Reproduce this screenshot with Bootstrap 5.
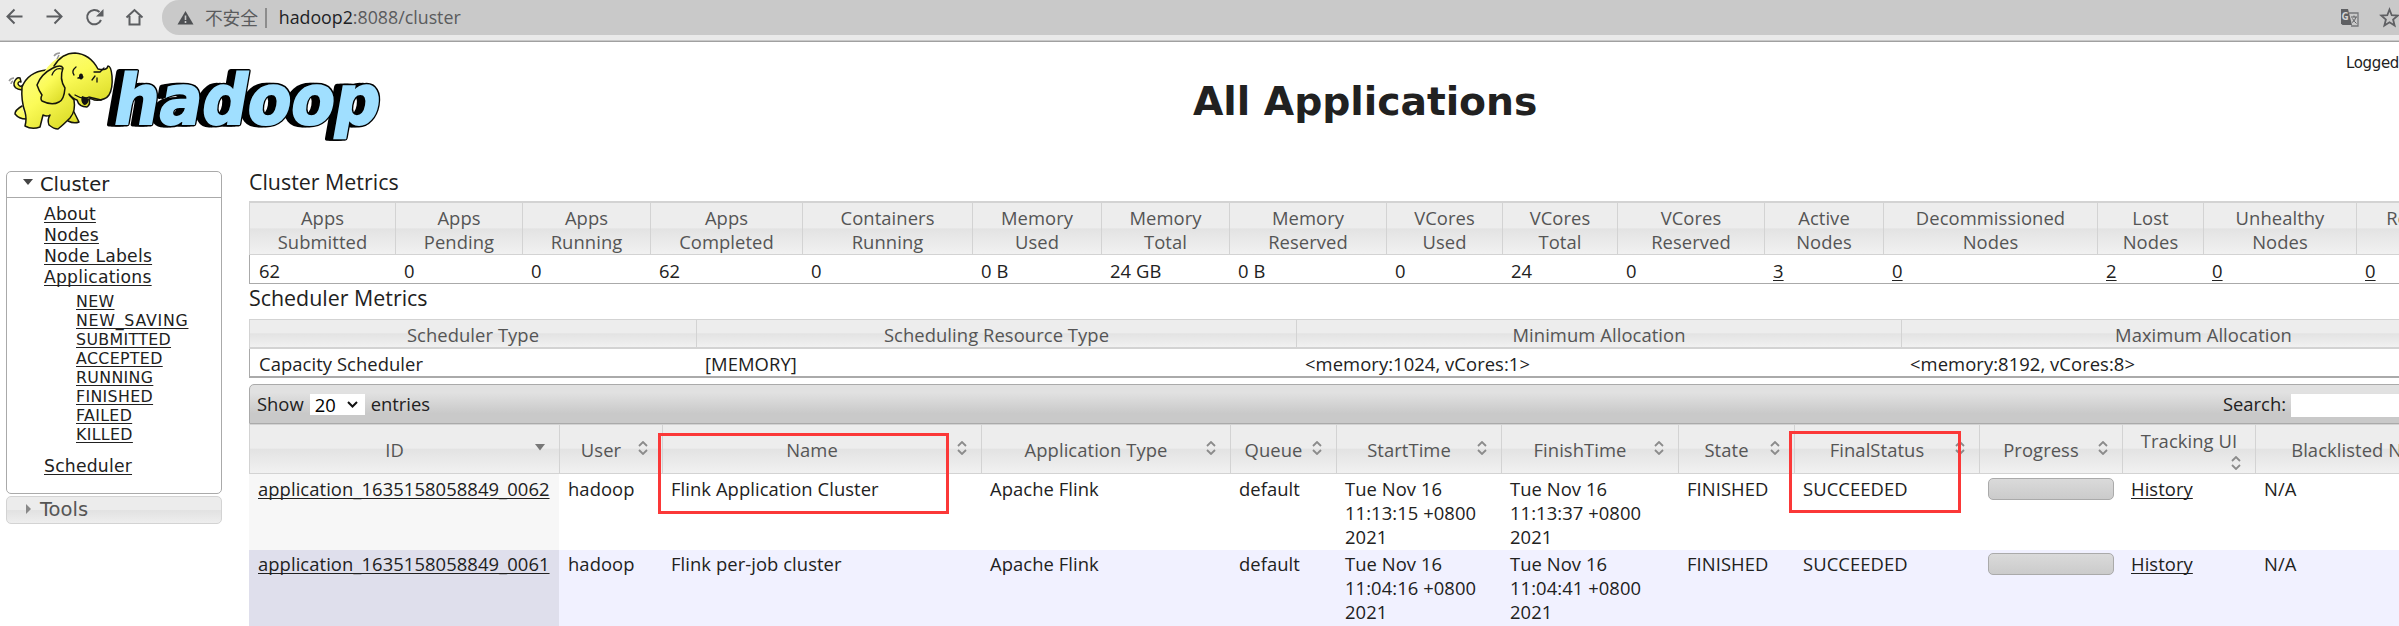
<!DOCTYPE html>
<html lang="en">
<head>
<meta charset="utf-8">
<title>All Applications</title>
<link href="https://cdn.jsdelivr.net/npm/bootstrap@5.3.0/dist/css/bootstrap.min.css" rel="stylesheet">
<style>
html,body{height:626px;overflow:hidden}
body{font-family:"Open Sans","Noto Sans CJK SC",sans-serif;font-size:18.4px;line-height:24px;color:#212121;background:#fff}
a,a:hover{color:#212121;text-decoration:underline;text-underline-offset:2px;text-decoration-thickness:1px;text-decoration-skip-ink:none}
.browser{height:42px;background:#e9e9e9;border-bottom:1px solid #a0a0a0;box-shadow:inset 0 -1px 0 #c8c8c8;padding-left:5px}
.browser .tool{width:40px;height:35px;flex:none}
.omni{height:35px;background:#c9c9c9;border-radius:17px 0 0 17px;margin-left:-3px;padding-left:14px;font-size:17.8px;color:#5a5b5d}
.omni .host{color:#202124}
.omni .bar{width:2px;height:20px;background:#8c8c8c;margin:0 12px 0 7px}
.banner{height:129px}
.banner h1{font:bold 39.3px/48px "DejaVu Sans",sans-serif;letter-spacing:-.05px;margin:0 0 0 793px;padding-top:36px;width:348px;white-space:nowrap}
.login{font:15px/20px "DejaVu Sans",sans-serif;letter-spacing:-.35px;padding-top:11px;width:53px;white-space:nowrap;overflow:hidden;color:#222}
.side{width:249px;padding-left:6px;font-family:"DejaVu Sans",sans-serif;flex:none}
.acc{width:216px;border:1px solid #aaa;border-radius:5px}
.acc-head{font-size:19.5px;line-height:25px;padding-left:15px}
.acc-body{height:296px;border-top:1px solid #aaa;padding:6px 0 0 37px}
.acc-body>a{display:block;font-size:17.2px;line-height:21px;width:max-content;letter-spacing:.22px}
.acc-sub{padding:4px 0 12px 32px}
.acc-sub a{display:block;font-size:15.8px;line-height:19px;width:max-content;letter-spacing:.35px}
.acc-sub a.wide{letter-spacing:.75px}
.acc.closed{margin-top:2px;height:28px;border-color:#d3d3d3;color:#555;background:linear-gradient(#ececec 50%,#e2e2e2 52%,#eee)}
.grid{table-layout:fixed;border-collapse:separate;border-spacing:0;width:2250px;margin:0;letter-spacing:.07px}
.grid th{font-weight:400;color:#555;text-align:center;border:1px solid #d3d3d3;border-width:1px 0 1px 1px;padding:2px 9px 0;background:linear-gradient(#ededed 48%,#e3e3e3 51%,#f1f1f1)}
.grid td{padding:0 9px;vertical-align:top}
.metric th{border-top-width:2px;height:54px}
.metric td,.sched td{border-bottom:1px solid #aaa;line-height:24px;height:29px;padding-top:4px}
.metric td:first-child,.sched td:first-child{border-left:1px solid #aaa}
.sched td{border-bottom-width:2px;padding-top:3px}
.sched th{height:30px;border-bottom-width:2px}
.title{font-size:21.4px;line-height:28px}
.main-pane{width:2256px;flex:none}
.dt-bar{width:2250px;height:40px;border:1px solid #aaa;border-radius:5px 5px 0 0;background:linear-gradient(#e1e1e1 20%,#c9c9c9 75%);padding:0 0 0 7px}
.len{width:55px;height:21px;background:#fff;color:#000;padding:0 7px 0 5px;margin:1px 6px 0}
.find{width:207px;height:23px;background:#fff;margin:3px 0 0 5px}
.apps th{height:50px}
.apps .ico{width:20px;flex:none;line-height:0;padding-bottom:4px}
.apps td{padding-top:3px;height:76px;background:#fff}
.apps tr.even td{background:#f1f1ff;height:76px;padding-top:2px}
.apps td:first-child{background:#f7f7f7;white-space:nowrap}
.apps tr.even td:first-child{background:#dfdfec}
.prog{width:126px;height:22px;border:1px solid #aaa;border-radius:5px;background:linear-gradient(#dadada,#cbcbcb);margin-top:1px}
.mark-box{position:absolute;border:3px solid #fb3838;z-index:5}
</style>
</head>
<body>
<header class="browser d-flex">
  <svg class="tool" viewBox="0 0 40 35" fill="none" stroke="#5c5e61" stroke-width="2"><path d="M17.500 16.500H3M9.500 9.500l-7 7 7 7"/></svg>
  <svg class="tool" viewBox="0 0 40 35" fill="none" stroke="#5c5e61" stroke-width="2"><path d="M1.500 16.500H16M9.500 9.500l7 7-7 7"/></svg>
  <svg class="tool" viewBox="0 0 40 35" fill="none" stroke="#5c5e61" stroke-width="2"><path d="M16 20A7.200 7.200 0 1 1 14.500 12"/><path d="M18.500 9v7.500h-7.500z" fill="#5c5e61" stroke="none"/></svg>
  <svg class="tool" viewBox="0 0 40 35" fill="none" stroke="#5c5e61" stroke-width="2"><path d="M1.500 17.500L9.500 10l8 7.500M4.500 16v8.500h10V16"/></svg>
  <div class="omni d-flex align-items-center flex-fill">
    <svg width="17" height="15" viewBox="0 0 17 15" class="me-2 flex-shrink-0" style="margin-left:1px"><path d="M8.500 1L16.500 14.500H.5z" fill="#4e5053"/><path d="M8.500 5.500v4.500M8.500 11v2" stroke="#c9c9c9" stroke-width="1.600"/></svg>
    <span style="margin-left:3px;letter-spacing:-.2px">不安全</span><span class="bar"></span><span style="padding-bottom:1px"><span class="host">hadoop2</span>:8088/cluster</span>
    <svg class="ms-auto flex-shrink-0" width="59" height="24" viewBox="0 0 59 24">
      <path d="M9 7h9v13h-7" fill="none" stroke="#76777a" stroke-width="1.300"/><path d="M1 3h7l4 16H2.500L1 17.500z" fill="#5f6063"/>
      <text x="1.500" y="14" font-size="10" font-weight="700" fill="#d5d5d5">G</text><path d="M11 11h6M14 9.500V11M16 11q-1 4-4 5.500M12.500 12.500q1.500 3 4 5" stroke="#5f6063" fill="none"/>
      <path d="M49.500 3.500l2.200 5.700 6 .4-4.600 3.900 1.500 6-5.100-3.300-5.100 3.300 1.500-6-4.600-3.900 6-.4z" fill="none" stroke="#5f6063" stroke-width="1.800"/>
    </svg>
  </div>
</header>
<div class="banner d-flex">
  <svg width="400" height="110" viewBox="0 42 400 110" class="flex-shrink-0">
    <defs><linearGradient id="skin" x1="0" y1="0" x2=".7" y2="1"><stop offset="0" stop-color="#fdfd86"/><stop offset=".5" stop-color="#fbfb58"/><stop offset="1" stop-color="#dede2b"/></linearGradient></defs>
    <g font-family="DejaVu Sans" font-weight="700" font-size="69" transform="translate(110 124) skewX(-10)">
      <g fill="#000" stroke="#000" stroke-width="5" stroke-linejoin="round">
        <text x="-6" y="0" textLength="266" lengthAdjust="spacingAndGlyphs">hadoop</text>
        <text x="-3" y="0" textLength="266" lengthAdjust="spacingAndGlyphs">hadoop</text>
        <text x="1" y="0" textLength="266" lengthAdjust="spacingAndGlyphs">hadoop</text>
      </g>
      <text x="1" y="0" fill="#a0dfff" stroke="#a0dfff" stroke-width="2" textLength="266" lengthAdjust="spacingAndGlyphs">hadoop</text>
    </g>
    <g fill="url(#skin)" stroke="#15150c" stroke-width="1.500" stroke-linejoin="round" stroke-linecap="round">
      <path d="M22 90q-9-1-8-7 2-6 6-5l1 4q-3-1-3 2 2 4 5 1"/>
      <path d="M22 106q-7 4-7 8 4 5 11 5M72 108l7 14q-5 2-11-1"/>
      <path d="M46 70Q28 72 22 87q-1 14 3 25 2 7 0 14 7 4 15 1l3-12q4 2 7 0-3 5-1 10 5 4 9 4 5-4 12-11 6-7 4-18z"/>
      <path d="M38 86C42 72 53 54 75 53q15 1 23 16 9 2 10-3 3 0 4 10 1 12-3 19-4 6-15 5-3-2-5-1 2 5-2 8-8 0-10-7-4-1-8-6-2 7-7 8-9 2-20 0l-4-9q-2-3 0-7z" stroke="none"/>
      <path d="M54 66Q62 53 75 53q15 1 23 16 9 2 10-3 3 0 4 10 1 12-3 19-4 6-15 5-3-2-5-1 2 5-2 8-8 0-10-7-4-1-8-6" fill="none"/>
      <path d="M37 85q4-11 16-17 8-4 10 0-4 11 2 20-1 12-6 14-7 4-17-1-2-2 0-6-3-4-5-10z"/>
    </g>
    <g fill="none" stroke="#111" stroke-width="1.300" stroke-linecap="round"><path d="M62 69q-7-2-10 6M74 75q-3-4 2-8M78 78l5-1M94 72h6l4-4M92 80l3-4M97 82v-4M75 95q8 5 14 2l12 3"/></g>
    <ellipse cx="81" cy="76.500" rx="2" ry="3" fill="#111"/><path d="M82 96q4 1 7 3-1 6-5 6-4-3-2-9z" fill="#111"/>
    <path d="M9 81q2-3 5-3M11 84q0-2 2-3M54 56q2-3 6-3M57 59l2-4" fill="none" stroke="#999" stroke-width="1.500"/>
  </svg>
  <h1>All Applications</h1>
  <div class="login ms-auto">Logged in as: dr.who</div>
</div>
<div class="d-flex">
  <nav class="side">
    <div class="acc">
      <div class="acc-head"><svg width="10" height="7" style="margin:-6px 7px 0 1px"><path d="M0 0h10L5 6z" fill="#454545"/></svg>Cluster</div>
      <div class="acc-body">
        <a href="#">About</a><a href="#">Nodes</a><a href="#">Node Labels</a><a href="#">Applications</a>
        <div class="acc-sub"><a href="#">NEW</a><a href="#" class="wide">NEW_SAVING</a><a href="#">SUBMITTED</a><a href="#">ACCEPTED</a><a href="#">RUNNING</a><a href="#">FINISHED</a><a href="#">FAILED</a><a href="#">KILLED</a></div>
        <a href="#">Scheduler</a>
      </div>
    </div>
    <div class="acc closed"><div class="acc-head"><svg width="6" height="10" style="margin:-3px 8px 0 4px"><path d="M0 0v10l5-5z" fill="#888"/></svg>Tools</div></div>
  </nav>
  <main class="main-pane">
    <div class="title" style="margin-top:-3px;padding-bottom:5px">Cluster Metrics</div>
    <table class="grid metric">
      <colgroup><col style="width:146px"><col style="width:127px"><col style="width:128px"><col style="width:152px"><col style="width:170px"><col style="width:129px"><col style="width:128px"><col style="width:157px"><col style="width:116px"><col style="width:115px"><col style="width:147px"><col style="width:119px"><col style="width:214px"><col style="width:106px"><col style="width:153px"><col></colgroup>
      <tr><th>Apps<br>Submitted</th><th>Apps<br>Pending</th><th>Apps<br>Running</th><th>Apps<br>Completed</th><th>Containers<br>Running</th><th>Memory<br>Used</th><th>Memory<br>Total</th><th>Memory<br>Reserved</th><th>VCores<br>Used</th><th>VCores<br>Total</th><th>VCores<br>Reserved</th><th>Active<br>Nodes</th><th>Decommissioned<br>Nodes</th><th>Lost<br>Nodes</th><th>Unhealthy<br>Nodes</th><th>Rebooted<br>Nodes</th></tr>
      <tr><td>62</td><td>0</td><td>0</td><td>62</td><td>0</td><td>0 B</td><td>24 GB</td><td>0 B</td><td>0</td><td>24</td><td>0</td><td><a href="#">3</a></td><td><a href="#">0</a></td><td><a href="#">2</a></td><td><a href="#">0</a></td><td><a href="#">0</a></td></tr>
    </table>
    <div class="title" style="padding-bottom:7px">Scheduler Metrics</div>
    <table class="grid sched" style="width:2256px">
      <colgroup><col style="width:447px"><col style="width:600px"><col style="width:605px"><col></colgroup>
      <tr><th>Scheduler Type</th><th>Scheduling Resource Type</th><th>Minimum Allocation</th><th>Maximum Allocation</th></tr>
      <tr><td>Capacity Scheduler</td><td>[MEMORY]</td><td>&lt;memory:1024, vCores:1&gt;</td><td>&lt;memory:8192, vCores:8&gt;</td></tr>
    </table>
    <section class="position-relative" style="margin-top:6px">
      <div class="dt-bar d-flex align-items-center"><span>Show</span>
        <span class="len d-flex align-items-center justify-content-between">20<svg width="11" height="7"><path d="M1 1l4.500 4.500L10 1" fill="none" stroke="#111" stroke-width="2"/></svg></span><span>entries</span>
        <span class="ms-auto">Search:</span><span class="find"></span></div>
      <svg class="d-none"><symbol id="both" viewBox="0 0 10 14"><path d="M1 5l4-4 4 4M1 9l4 4 4-4" fill="none" stroke="#8b8b8b" stroke-width="1.800"/></symbol></svg>
      <table class="grid apps">
        <colgroup><col style="width:310px"><col style="width:103px"><col style="width:319px"><col style="width:249px"><col style="width:106px"><col style="width:165px"><col style="width:177px"><col style="width:116px"><col style="width:185px"><col style="width:143px"><col style="width:133px"><col></colgroup>
        <thead><tr id="heads"></tr></thead><tbody id="rows"></tbody>
      </table>
      <div class="mark-box" style="left:409px;top:49px;width:291px;height:81px"></div>
      <div class="mark-box" style="left:1540px;top:47px;width:172px;height:82px"></div>
    </section>
  </main>
</div>
<script>
const both='<svg width="10" height="14"><use href="#both"/></svg>';
const down='<svg width="10" height="7" style="margin-top:-2px"><path d="M0 0h10L5 6.500z" fill="#777"/></svg>';
document.getElementById('heads').innerHTML=['ID','User','Name','Application Type','Queue','StartTime','FinishTime','State','FinalStatus','Progress','Tracking UI','Blacklisted Nodes'].map((h,i)=>
 h==='Tracking UI'?`<th><div style="line-height:20px">${h}</div><div style="padding-right:5px;margin-top:5px"><svg class="d-block ms-auto" width="10" height="14"><use href="#both"/></svg></div></th>`:
 `<th><div class="d-flex align-items-center"><span class="flex-fill text-nowrap">${h}</span><span class="ico">${i?both:down}</span></div></th>`).join('');
const data=[['0062','Flink Application Cluster','11:13:15','11:13:37'],['0061','Flink per-job cluster','11:04:16','11:04:41']];
document.getElementById('rows').innerHTML=data.map((r,i)=>`<tr class="${i?'even':'odd'}"><td><a href="#">application_1635158058849_${r[0]}</a></td><td>hadoop</td><td>${r[1]}</td><td>Apache Flink</td><td>default</td><td>Tue Nov 16<br>${r[2]} +0800<br>2021</td><td>Tue Nov 16<br>${r[3]} +0800<br>2021</td><td>FINISHED</td><td>SUCCEEDED</td><td><div class="prog"></div></td><td><a href="#">History</a></td><td>N/A</td></tr>`).join('');
</script>
<script src="https://cdn.jsdelivr.net/npm/bootstrap@5.3.0/dist/js/bootstrap.bundle.min.js"></script>
</body>
</html>
